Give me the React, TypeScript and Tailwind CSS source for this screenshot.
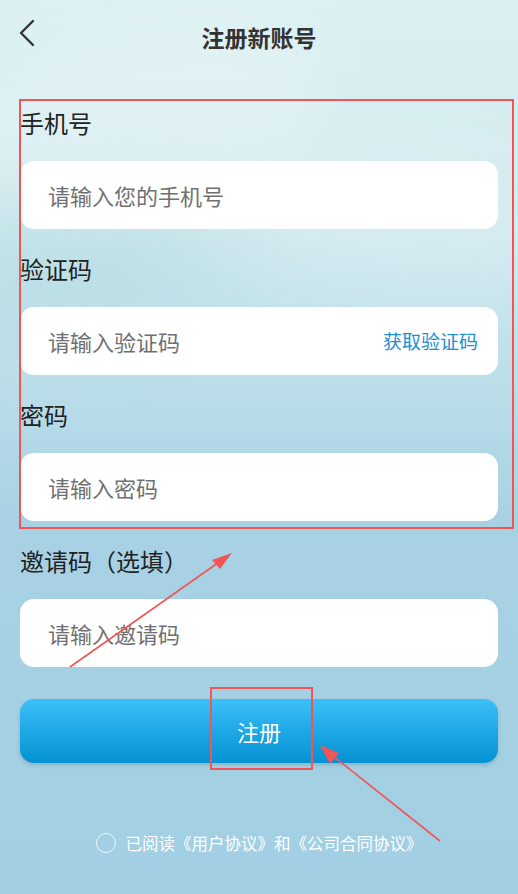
const font = { fontFamily: '"Noto Sans CJK SC", "Noto Sans", sans-serif' };

function Field({ label, placeholder, action }: { label: string; placeholder: string; action?: string }) {
  return (
    <div className="flex flex-col">
      <div className="text-[24px] leading-[34px] text-[#222] mt-[23px] mb-[21px]">{label}</div>
      <div className="h-[68px] rounded-[14px] bg-white flex items-center justify-between pl-[28px] pr-[20px]">
        <span className="text-[22px] text-[#707070]">{placeholder}</span>
        {action && <span className="text-[19px] text-[#1c8fd1]">{action}</span>}
      </div>
    </div>
  );
}

export default function App() {
  return (
    <div
      className="relative w-[518px] h-[894px] overflow-hidden bg-[linear-gradient(180deg,#dcf0f2_0%,#d3ebef_18%,#bfe0ea_40%,#a8d2e4_58%,#a2cfe3_100%)]"
      style={font}
    >
      {/* soft wave texture */}
      <div className="absolute left-[-80px] top-[40px] w-[420px] h-[160px] rounded-[50%] bg-white/25 blur-2xl rotate-[-12deg]" />
      <div className="absolute left-[220px] top-[150px] w-[360px] h-[140px] rounded-[50%] bg-white/20 blur-2xl rotate-[8deg]" />
      <div className="absolute left-[-60px] top-[210px] w-[260px] h-[120px] rounded-[50%] bg-[#9fd3d8]/30 blur-2xl" />

      <div className="relative">
        <div className="relative h-[83px] flex items-center justify-center">
          <svg className="absolute left-[18px] top-[18px]" width="18" height="30" viewBox="0 0 18 30">
            <polyline points="15,3 3,15 15,27" fill="none" stroke="#333" strokeWidth="2.4" strokeLinecap="round" strokeLinejoin="round" />
          </svg>
          <div className="text-[23px] font-bold text-[#333] -mt-[8px]">注册新账号</div>
        </div>

        <div className="px-[20px]">
          <Field label="手机号" placeholder="请输入您的手机号" />
          <Field label="验证码" placeholder="请输入验证码" action="获取验证码" />
          <Field label="密码" placeholder="请输入密码" />
          <Field label="邀请码（选填）" placeholder="请输入邀请码" />

          <div className="mt-[32px] h-[64px] rounded-[14px] bg-[linear-gradient(180deg,#3cc0f9_0%,#1ea8e6_50%,#0592d2_100%)] shadow-[0_2px_4px_rgba(0,0,0,0.15)] flex items-center justify-center">
            <span className="text-[22px] text-white">注册</span>
          </div>

          <div className="mt-[68px] flex items-center justify-center gap-[10px]">
            <div className="w-[20px] h-[20px] rounded-full border-[1.5px] border-white/80" />
            <span className="text-[16.5px] text-white">已阅读《用户协议》和《公司合同协议》</span>
          </div>
        </div>
      </div>

      {/* annotations */}
      <div className="absolute left-[19px] top-[99px] w-[495px] h-[430px] border-2 border-[#f25555]" />
      <div className="absolute left-[210px] top-[687px] w-[103px] h-[83px] border-2 border-[#f25555]" />
      <svg className="absolute inset-0" width="518" height="894" viewBox="0 0 518 894">
        <line x1="70" y1="667" x2="222" y2="560" stroke="#f25555" strokeWidth="1.6" />
        <polygon points="232,553 212,560 220,569" fill="#f25555" />
        <line x1="440" y1="841" x2="328" y2="752" stroke="#f25555" strokeWidth="1.6" />
        <polygon points="320,745 330,764 339,753" fill="#f25555" />
      </svg>
    </div>
  );
}
